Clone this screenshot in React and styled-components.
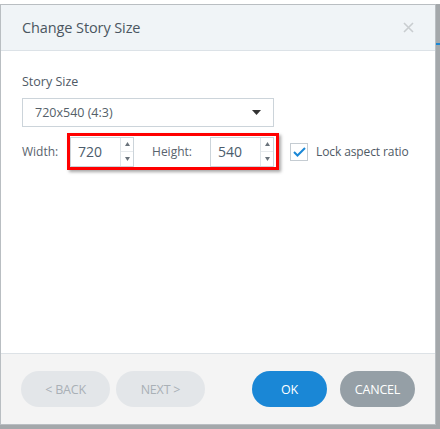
import React, { useState } from "react";
import styled, { createGlobalStyle } from "styled-components";

const Global = createGlobalStyle`
  html, body { margin: 0; padding: 0; }
  body {
    font-family: "Open Sans", "Noto Sans", sans-serif;
    background: #fff;
  }
`;

const Page = styled.div`
  width: 440px;
  height: 429px;
  box-sizing: border-box;
  padding-top: 4px;
  background:
    linear-gradient(to bottom, #fff 4px, #a4a8ab 4px, #a4a8ab 43px, #1a87d6 43px, #1a87d6 45px, #a4a8ab 45px);
`;

const Dialog = styled.div`
  width: 436px;
  height: 421px;
  box-sizing: border-box;
  border: 1px solid #b9bec2;
  background: #fff;
  display: flex;
  flex-direction: column;
`;

const Header = styled.div`
  height: 45px;
  flex: none;
  background: #f0f4f7;
  border-bottom: 1px solid #dce2e7;
  display: flex;
  align-items: center;
  justify-content: space-between;
  padding: 0 20px 0 21px;
`;

const Title = styled.h1`
  margin: 0;
  font-size: 14.5px;
  font-weight: 400;
  color: #4b5661;
  letter-spacing: -0.1px;
`;

const Close = styled.button`
  border: 0;
  background: none;
  padding: 0;
  width: 12px;
  height: 12px;
  display: flex;
  cursor: pointer;
`;

const Body = styled.div`
  flex: 1;
  padding: 22px 21px 0;
  display: flex;
  flex-direction: column;
`;

const Label = styled.div`
  font-size: 12.5px;
  color: #4f5a65;
  margin-bottom: 8px;
`;

const Select = styled.div`
  width: 252px;
  height: 29px;
  box-sizing: border-box;
  border: 1px solid #ccd4da;
  display: flex;
  align-items: center;
  justify-content: space-between;
  padding: 0 12px 0 12px;
  font-size: 12.5px;
  color: #555f69;
`;

const Row = styled.div`
  display: flex;
  align-items: center;
  margin-top: 6px;
  white-space: nowrap;
`;

const FieldLabel = styled.span`
  font-size: 12px;
  color: #59636d;
  width: 45px;
  flex: none;
`;

const Highlight = styled.div`
  display: flex;
  align-items: center;
  border: 3px solid #ff0000;
  box-shadow: 2px 2px 3px rgba(0, 0, 0, 0.35);
  padding: 0 2px 0 0;
  height: 31px;
  flex: none;
`;

const NumberBox = styled.div`
  width: 64px;
  height: 30px;
  box-sizing: border-box;
  border: 1px solid #ccd4da;
  display: flex;
`;

const NumberValue = styled.div`
  flex: 1;
  display: flex;
  align-items: center;
  padding-left: 7px;
  font-size: 14px;
  color: #4c5c6c;
`;

const Spinner = styled.div`
  width: 12px;
  border-left: 1px solid #dfe4e8;
  display: flex;
  flex-direction: column;
`;

const Spin = styled.div`
  flex: 1;
  display: flex;
  align-items: center;
  justify-content: center;
  & + & { border-top: 1px solid #e6eaed; }
`;

const HeightLabel = styled.span`
  font-size: 12px;
  color: #59636d;
  width: 76px;
  text-align: center;
`;

const Check = styled.label`
  display: flex;
  align-items: center;
  margin-left: 11px;
  font-size: 12px;
  letter-spacing: -0.1px;
  color: #4f5a65;
  cursor: pointer;
`;

const Box = styled.span`
  width: 18px;
  height: 18px;
  box-sizing: border-box;
  border: 1px solid #c5ccd2;
  display: flex;
  align-items: center;
  justify-content: center;
  margin-right: 8px;
  background: #fff;
`;

const Footer = styled.div`
  height: 70px;
  flex: none;
  background: #f4f4f4;
  border-top: 1px solid #dde2e6;
  display: flex;
  align-items: center;
  padding: 0 19px 0 20px;
  gap: 6px;
`;

const Button = styled.button`
  height: 36px;
  width: ${(p) => p.$w}px;
  border: 0;
  border-radius: 18px;
  font-family: inherit;
  font-size: 12.5px;
  letter-spacing: -0.2px;
  background: ${(p) => p.$bg};
  color: ${(p) => p.$fg};
  margin-left: ${(p) => p.$ml || 0}px;
  cursor: pointer;
`;

const Up = () => (
  <svg width="5" height="4" viewBox="0 0 5 4"><path d="M2.5 0L5 4H0z" fill="#6a737b" /></svg>
);
const Down = () => (
  <svg width="5" height="4" viewBox="0 0 5 4"><path d="M0 0h5L2.5 4z" fill="#6a737b" /></svg>
);

function NumberField({ value }) {
  return (
    <NumberBox>
      <NumberValue>{value}</NumberValue>
      <Spinner>
        <Spin><Up /></Spin>
        <Spin><Down /></Spin>
      </Spinner>
    </NumberBox>
  );
}

export default function App() {
  const [locked, setLocked] = useState(true);
  return (
    <Page>
      <Global />
      <Dialog>
        <Header>
          <Title>Change Story Size</Title>
          <Close aria-label="close">
            <svg width="11" height="11" viewBox="0 0 11 11">
              <path d="M1 1L10 10M10 1L1 10" stroke="#c9cdd0" strokeWidth="1.6" />
            </svg>
          </Close>
        </Header>
        <Body>
          <Label>Story Size</Label>
          <Select>
            <span>720x540 (4:3)</span>
            <svg width="9" height="5" viewBox="0 0 9 5"><path d="M0 0h9L4.5 5z" fill="#333" /></svg>
          </Select>
          <Row>
            <FieldLabel>Width:</FieldLabel>
            <Highlight>
              <NumberField value="720" />
              <HeightLabel>Height:</HeightLabel>
              <NumberField value="540" />
            </Highlight>
            <Check onClick={() => setLocked(!locked)}>
              <Box>
                {locked && (
                  <svg width="13" height="10" viewBox="0 0 13 10">
                    <path d="M1 5l3.5 3.5L12 1" stroke="#1a87d6" strokeWidth="2" fill="none" />
                  </svg>
                )}
              </Box>
              Lock aspect ratio
            </Check>
          </Row>
        </Body>
        <Footer>
          <Button $w={89} $bg="#e3e6e9" $fg="#a9b0b6">&lt; BACK</Button>
          <Button $w={89} $bg="#e3e6e9" $fg="#a9b0b6">NEXT &gt;</Button>
          <Button $w={75} $bg="#1a87d6" $fg="#fff" $ml={41}>OK</Button>
          <Button $w={75} $bg="#959fa6" $fg="#fff" $ml={7}>CANCEL</Button>
        </Footer>
      </Dialog>
    </Page>
  );
}
